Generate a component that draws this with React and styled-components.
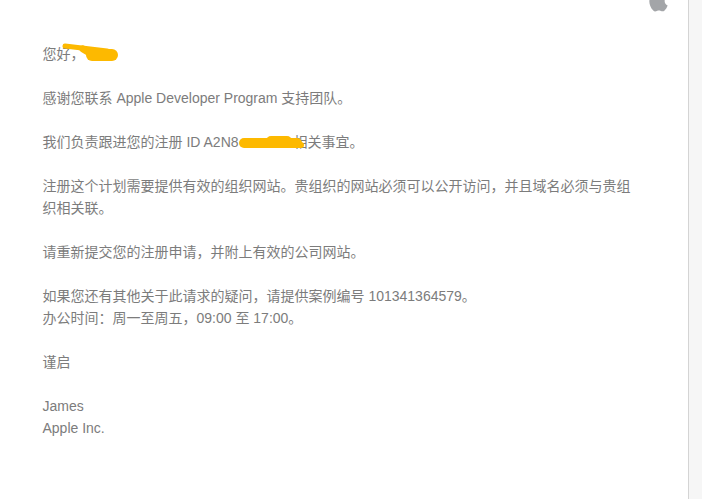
import React from "react";
import styled, { createGlobalStyle } from "styled-components";

const Global = createGlobalStyle`
  html, body { margin: 0; padding: 0; background: #fff; overflow: hidden; }
`;

const Page = styled.div`
  display: flex;
  width: 702px;
  height: 499px;
  overflow: hidden;
  background: #fff;
`;

const Mail = styled.main`
  position: relative;
  flex: 1;
  padding: 43px 0 0 42.5px;
  box-sizing: border-box;
  font-family: "Liberation Sans", "Noto Sans CJK SC", sans-serif;
  font-size: 14px;
  line-height: 22px;
  color: #7c7c7c;
`;

const Para = styled.p`
  margin: 0 0 22px;
  width: 595px;
`;

const Line = styled.span`
  display: block;
`;

const Inline = styled.span`
  position: relative;
`;

const Gap = styled.span`
  display: inline-block;
  width: ${(p) => p.$w}px;
`;

const Logo = styled.svg`
  position: absolute;
  top: -14px;
  left: 644px;
  width: 29px;
  height: 29px;
  fill: #a3a5a8;
`;

const Redaction = styled.svg`
  position: absolute;
  fill: none;
  stroke: #fdb900;
  stroke-linecap: round;
  stroke-linejoin: round;
  overflow: visible;
`;

const Greeting = styled(Redaction)`
  left: 20px;
  top: -9px;
  width: 56px;
  height: 20px;
`;

const IdMark = styled(Redaction)`
  left: 196px;
  top: 1px;
  width: 66px;
  height: 14px;
`;

const Scrollbar = styled.aside`
  width: 14px;
  height: 100%;
  box-sizing: border-box;
  background: #f6f6f6;
  border-left: 1px solid #d4d4d4;
`;

export default function App() {
  return (
    <Page>
      <Global />
      <Mail>
        <Logo viewBox="0 0 24 24">
          <path d="M17.05 20.28c-.98.95-2.05.8-3.08.35-1.09-.46-2.09-.48-3.24 0-1.44.62-2.2.44-3.06-.35C2.79 15.25 3.51 7.59 9.05 7.31c1.35.07 2.29.74 3.08.8 1.18-.24 2.31-.93 3.57-.84 1.51.12 2.65.72 3.4 1.8-3.12 1.87-2.38 5.98.48 7.13-.57 1.5-1.31 2.99-2.54 4.09zM12.03 7.25c-.15-2.23 1.66-4.07 3.74-4.25.29 2.58-2.34 4.5-3.74 4.25z" />
        </Logo>
        <Para>
          <Inline>
            您好，
            <Greeting viewBox="0 0 56 20">
              <path d="M2 9 L44 14" strokeWidth="5" />
              <path d="M20 12 L30 18" strokeWidth="7" />
              <path d="M29 18 H49" strokeWidth="12" />
            </Greeting>
          </Inline>
        </Para>
        <Para>感谢您联系 Apple Developer Program 支持团队。</Para>
        <Para>
          <Inline>
            我们负责跟进您的注册 ID A2N8
            <IdMark viewBox="0 0 66 14">
              <path d="M5 8 H58" strokeWidth="10" />
              <path d="M32 6 H48" strokeWidth="10" />
              <path d="M50 10 H62" strokeWidth="6" />
            </IdMark>
          </Inline>
          <Gap $w={55} />
          相关事宜。
        </Para>
        <Para>注册这个计划需要提供有效的组织网站。贵组织的网站必须可以公开访问，并且域名必须与贵组织相关联。</Para>
        <Para>请重新提交您的注册申请，并附上有效的公司网站。</Para>
        <Para>
          <Line>如果您还有其他关于此请求的疑问，请提供案例编号 101341364579。</Line>
          <Line>办公时间：周一至周五，09:00 至 17:00。</Line>
        </Para>
        <Para>谨启</Para>
        <Para>
          <Line>James</Line>
          <Line>Apple Inc.</Line>
        </Para>
      </Mail>
      <Scrollbar />
    </Page>
  );
}
